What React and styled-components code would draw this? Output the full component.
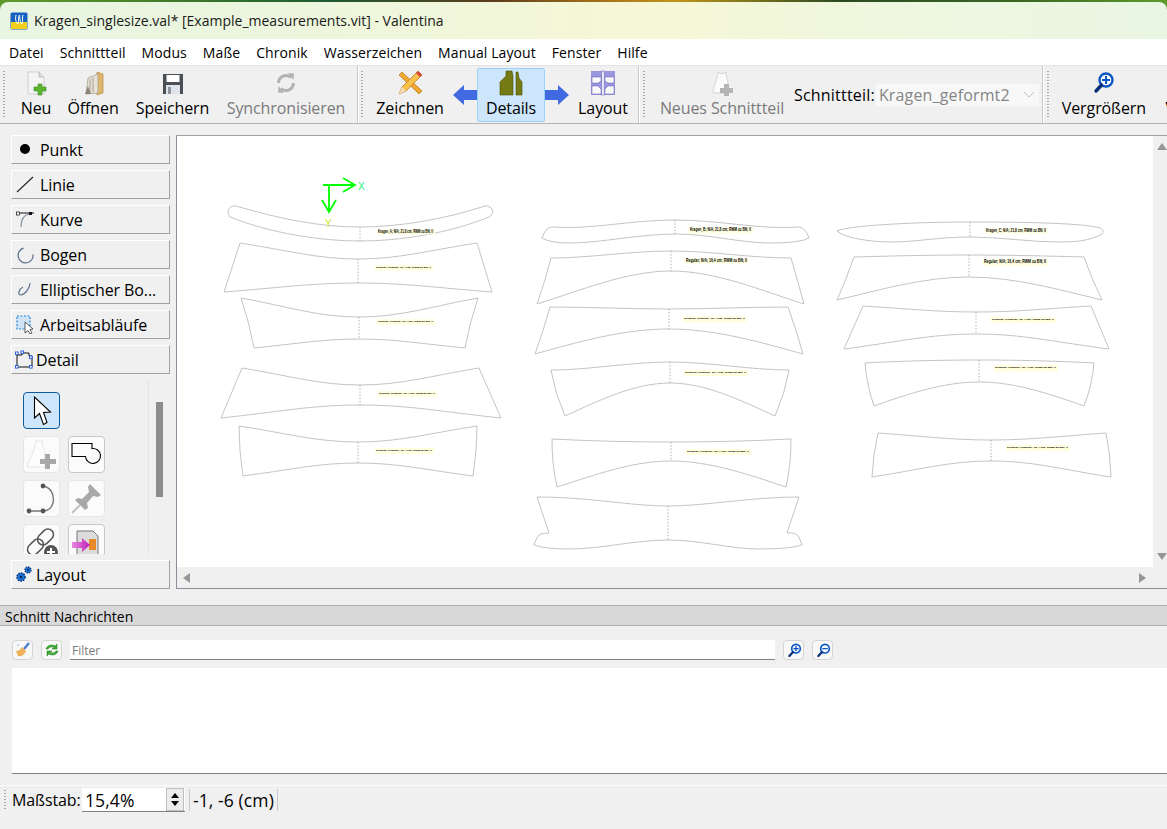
import React from 'react'
import styled, { createGlobalStyle } from 'styled-components'

const GlobalStyle = createGlobalStyle`
  html, body {
    margin: 0;
    height: 100%;
    overflow: hidden;
    background: #f0f0f0;
  }
  * { box-sizing: border-box; }
`

const Window = styled.div`
  width: 1167px;
  height: 829px;
  display: flex;
  flex-direction: column;
  overflow: hidden;
  background: #f0f0f0;
  color: #000;
  font-family: 'Open Sans', 'Noto Sans', sans-serif;
  font-size: 14px;
`

const Wallpaper = styled.div`
  padding-top: 2px;
  flex: none;
  background: linear-gradient(90deg, #5f9a2a 0%, #3f7a2a 15%, #1c5a30 28%, #5a3a1a 42%, #a8741a 52%, #c0941a 58%, #2a4a20 72%, #3a6a24 88%, #5f9a2a 100%);
`

const TitleBar = styled.div`
  height: 37px;
  padding-left: 10px;
  display: flex;
  align-items: center;
  gap: 6px;
  font-size: 14px;
  color: #1a1a1a;
  border-radius: 8px 8px 0 0;
  background: linear-gradient(90deg, #e7f5e2 0%, #eef6dc 30%, #f6f7d6 55%, #eef7e0 80%, #e9f6e4 100%);
`

const MenuBar = styled.div`
  height: 26px;
  flex: none;
  padding: 0 0 0 1px;
  display: flex;
  align-items: center;
  background: #fff;
  font-size: 14px;
  letter-spacing: 0.08px;
`

const MenuItem = styled.span`
  padding: 0 8px;
`

const ToolBar = styled.div`
  height: 59px;
  flex: none;
  display: flex;
  align-items: stretch;
  overflow: hidden;
  background: #f0f0f0;
  border-top: 1px solid #e4e4e4;
  border-bottom: 1px solid #b4b4b4;
`

const Handle = styled.div`
  flex: none;
  width: 2px;
  margin: 4px ${p => p.$after}px 4px ${p => p.$before}px;
  background-image: radial-gradient(circle, #a8a8a8 0.8px, transparent 1px);
  background-size: 2px 3px;
`

const Separator = styled.div`
  flex: none;
  width: 1px;
  margin-left: ${p => p.$left}px;
  background: #c8c8c8;
  box-shadow: 1px 0 0 #fff;
`

const ToolButton = styled.div`
  flex: none;
  width: ${p => p.$width}px;
  margin: 2px 0 1px;
  display: flex;
  flex-direction: column;
  align-items: center;
  justify-content: flex-end;
  padding-bottom: 2px;
  border: 1px solid ${p => (p.$active ? '#99d1ff' : 'transparent')};
  border-radius: 2px;
  background: ${p => (p.$active ? '#cde6fb' : 'transparent')};
  color: ${p => (p.$disabled ? '#7a7a7a' : '#000')};
  font-size: 16px;
  letter-spacing: -0.1px;
  line-height: 21px;
  white-space: nowrap;
`

const ToolIcon = styled.svg`
  width: 26px;
  height: 26px;
  margin-bottom: 2px;
`

const ModeArrow = styled.svg`
  flex: none;
  align-self: center;
  width: 24px;
  height: 20px;
  margin: 0 ${p => p.$right || 0}px 0 ${p => p.$left || 0}px;
`

const ComboLabel = styled.span`
  flex: none;
  align-self: center;
  margin-left: 5px;
  font-size: 16px;
  letter-spacing: 0.2px;
  white-space: nowrap;
`

const Combo = styled.div`
  flex: none;
  align-self: center;
  width: 165px;
  height: 24px;
  padding: 0 4px 0 3px;
  display: flex;
  align-items: center;
  justify-content: space-between;
  background: #f8f8f8;
  border: 1px solid #f2f2f2;
  color: #858585;
  font-size: 16px;
  letter-spacing: 0.15px;
`

const Body = styled.div`
  height: 465px;
  flex: none;
  display: flex;
`

const SidePanel = styled.div`
  width: 176px;
  flex: none;
  padding: 11px 6px 0 11px;
  display: flex;
  flex-direction: column;
  gap: 6px;
`

const GroupButton = styled.div`
  height: 29px;
  flex: none;
  display: flex;
  align-items: center;
  gap: ${p => p.$gap}px;
  padding-left: ${p => p.$pad}px;
  background: #f0f0f0;
  border: 1px solid;
  border-color: #fff #a0a0a0 #a0a0a0 #fff;
  font-size: 16px;
  letter-spacing: -0.1px;
  white-space: nowrap;
`

const GroupIcon = styled.svg`
  width: 19px;
  height: 19px;
  flex: none;
`

const ToolPanel = styled.div`
  height: 174px;
  flex: none;
  display: flex;
  overflow: hidden;
`

const ToolGrid = styled.div`
  width: 138px;
  flex: none;
  padding: 12px 0 0 12px;
  display: grid;
  grid-template-columns: 37px 37px;
  grid-auto-rows: 37px;
  gap: 7px 8px;
  border-right: 1px solid #e4e4e4;
`

const SquareTool = styled.div`
  width: 37px;
  height: 37px;
  display: flex;
  align-items: center;
  justify-content: center;
  border-radius: 4px;
  border: 1px solid ${p => (p.$active ? '#0f5a9a' : p.$dim ? '#e6e6e6' : '#c8c8c8')};
  background: ${p => (p.$active ? '#cde6fb' : '#fbfbfb')};
`

const ToolSvg = styled.svg`
  width: 35px;
  height: 35px;
`

const PanelThumb = styled.div`
  width: 7px;
  height: 95px;
  margin: 22px 0 0 7px;
  background: #8c8c8c;
`

const CanvasFrame = styled.div`
  flex: 1;
  margin-top: 11px;
  display: grid;
  grid-template-columns: 976px 1fr;
  grid-template-rows: 431px 1fr;
  border-left: 1px solid #8a8f99;
  border-top: 1px solid #a0a0a0;
  border-bottom: 1px solid #8a8f99;
`

const Sheet = styled.svg`
  width: 976px;
  height: 431px;
  display: block;
  background: #fff;
`

const VScroll = styled.div`
  display: flex;
  flex-direction: column;
  justify-content: space-between;
  align-items: center;
  padding: 7px 0 7px 4px;
`

const HScroll = styled.div`
  grid-column: 1 / span 2;
  display: flex;
  align-items: center;
  justify-content: space-between;
  padding: 0 21px 0 6px;
`

const Triangle = styled.span`
  width: 0;
  height: 0;
  border-style: solid;
  border-color: transparent;
  ${p => p.$dir === 'up' && 'border-width: 0 5px 7px; border-bottom-color: #969696;'}
  ${p => p.$dir === 'down' && 'border-width: 7px 5px 0; border-top-color: #969696;'}
  ${p => p.$dir === 'left' && 'border-width: 5px 7px 5px 0; border-right-color: #969696;'}
  ${p => p.$dir === 'right' && 'border-width: 5px 0 5px 7px; border-left-color: #969696;'}
`

const DockTitle = styled.div`
  height: 21px;
  flex: none;
  margin-top: 16px;
  padding: 1px 0 0 5px;
  display: flex;
  align-items: center;
  background: #d8d8d8;
  border-top: 1px solid #b0b0b0;
  border-bottom: 1px solid #b0b0b0;
  font-size: 14px;
`

const FilterRow = styled.div`
  height: 20px;
  flex: none;
  margin-top: 14px;
  padding-left: 12px;
  display: flex;
  align-items: center;
  gap: 8px;
`

const SmallButton = styled.div`
  width: 21px;
  height: 20px;
  flex: none;
  display: flex;
  align-items: center;
  justify-content: center;
  border: 1px solid #d4d4d4;
  border-radius: 4px;
  background: #f8f8f8;
`

const SmallIcon = styled.svg`
  width: 16px;
  height: 16px;
`

const FilterInput = styled.div`
  width: 705px;
  height: 20px;
  padding: 1px 0 0 2px;
  display: flex;
  align-items: center;
  background: #fff;
  border-bottom: 1px solid #808080;
  color: #7a7a7a;
  font-size: 12px;
`

const MessageList = styled.div`
  height: 106px;
  flex: none;
  margin: 8px 0 0 12px;
  background: #fff;
  border-bottom: 1px solid #808080;
`

const StatusBar = styled.div`
  flex: 1;
  margin-top: 11px;
  padding-top: 2px;
  display: flex;
  align-items: flex-start;
  border-top: 1px solid #fbfbfb;
`

const StatusHandle = styled.div`
  width: 2px;
  height: 22px;
  margin: 1px 6px 0 4px;
  background-image: radial-gradient(circle, #a8a8a8 0.8px, transparent 1px);
  background-size: 2px 3px;
`

const StatusLabel = styled.span`
  width: 70px;
  font-size: 16px;
  letter-spacing: -0.1px;
  line-height: 24px;
  white-space: nowrap;
`

const StatusValue = styled.span`
  font-size: 17.5px;
  letter-spacing: 0.1px;
  line-height: 24px;
  white-space: nowrap;
`

const SpinBox = styled.div`
  width: 103px;
  height: 24px;
  padding-left: 3px;
  display: flex;
  align-items: center;
  justify-content: space-between;
  background: #fff;
  border-bottom: 1px solid #808080;
`

const SpinButtons = styled.div`
  width: 18px;
  height: 23px;
  display: flex;
  flex-direction: column;
  align-items: center;
  justify-content: space-around;
  padding: 2px 0;
  margin-right: 1px;
  background: #ececec;
  border: 1px solid #c0c0c0;
`

const SpinUp = styled.span`
  width: 0;
  height: 0;
  border-style: solid;
  border-width: 0 4px 5px;
  border-color: transparent transparent #000;
`

const SpinDown = styled(SpinUp)`
  border-width: 5px 4px 0;
  border-color: #000 transparent transparent;
`

const StatusRule = styled.div`
  width: 1px;
  height: 22px;
  margin: 1px ${p => p.$right}px 0 ${p => p.$left}px;
  background: #c8c8c8;
`

const AppIcon = () => (
  <svg width="18" height="18" viewBox="0 0 18 18">
    <rect x="0.5" y="0.5" width="17" height="17" rx="1.5" fill="#1763c0" />
    <rect x="1" y="10" width="16" height="7" fill="#f2cf1b" />
    <path d="M6 3 C5 7 6 11 8 12 C9 9 8 5 9.5 3 C10 7 10 11 12 12 C13 9 12 5 13 3" fill="none" stroke="#fff" strokeWidth="1" />
  </svg>
)

const NewIcon = () => (
  <ToolIcon viewBox="0 0 26 26">
    <path d="M5 2 H16 L21 7 V24 H5 Z" fill="#f4f4f4" stroke="#cfcfcf" />
    <path d="M16 2 V7 H21" fill="#dcdcdc" stroke="#bdbdbd" />
    <path d="M15 14 H19 V17 H23 V21 H19 V25 H15 V21 H11 V17 H15 Z" fill="#5cb531" stroke="#3d8f1e" strokeWidth="0.6" />
  </ToolIcon>
)

const OpenIcon = () => (
  <ToolIcon viewBox="0 0 26 26">
    <path d="M17 2 L23 4 V23 L17 25 Z" fill="#e0b66a" stroke="#b48c48" strokeWidth="0.7" />
    <path d="M8 8 L18 4 V23 L6 24 Z" fill="#e6e1d6" stroke="#a09888" strokeWidth="0.7" />
    <path d="M10 9 V22 M13 7.5 V22" stroke="#a8a294" strokeWidth="1" />
    <path d="M5 24 L8 16 L11 24 Z" fill="#8c8577" />
  </ToolIcon>
)

const SaveIcon = () => (
  <ToolIcon viewBox="0 0 26 26">
    <path d="M3 4 H23 V24 H3 Z" fill="#4a4f55" />
    <rect x="6.5" y="5" width="13" height="7" fill="#fff" />
    <rect x="6" y="15" width="14" height="9" fill="#dfe3ea" />
    <rect x="8" y="17" width="3" height="7" fill="#8d949c" />
  </ToolIcon>
)

const SyncIcon = () => (
  <ToolIcon viewBox="0 0 26 26">
    <path d="M5.5 13 A7.5 7.5 0 0 1 18 7.5" fill="none" stroke="#b2b2b2" strokeWidth="3" />
    <path d="M20.5 13 A7.5 7.5 0 0 1 8 18.5" fill="none" stroke="#b2b2b2" strokeWidth="3" />
    <path d="M15 3 L21 3.5 L20.5 10 Z M11 23 L5 22.5 L5.5 16 Z" fill="#b2b2b2" />
  </ToolIcon>
)

const DrawIcon = () => (
  <ToolIcon viewBox="0 0 26 26">
    <path d="M2 5 L5 2 L25 21 L22 24 Z" fill="#f0a830" stroke="#b8741a" strokeWidth="0.7" />
    <path d="M21 1 L25 5 L9 21 L2 24 L5 17 Z" fill="#f6c04a" stroke="#b8741a" strokeWidth="0.7" />
    <path d="M21 1 L25 5 L23 7 L19 3 Z" fill="#d8443a" />
    <path d="M5 17 L9 21 L2 24 Z" fill="#f5dfb8" />
  </ToolIcon>
)

const DetailsIcon = () => (
  <ToolIcon viewBox="0 0 26 26">
    <path d="M2 25 V12 L8 6 V1 H14 L15 6 V25 Z" fill="#767a12" stroke="#4f520a" strokeWidth="0.6" />
    <path d="M18 25 V2 H20 L21 8 L24 12 V25 Z" fill="#767a12" stroke="#4f520a" strokeWidth="0.6" />
  </ToolIcon>
)

const LayoutIcon = () => (
  <ToolIcon viewBox="0 0 26 26">
    <rect x="1" y="1" width="24" height="24" fill="#9a96e2" />
    <path d="M2 7 H11 V11 L8 13 H2 Z M2 16 H8 L11 19 V24 H2 Z M15 7 H24 V13 H18 L15 11 Z M15 19 L18 16 H24 V24 H15 Z" fill="#fafafa" stroke="#5d59ae" strokeWidth="0.5" />
    <rect x="11.5" y="1" width="3" height="24" fill="#e6e6f6" stroke="#5d59ae" strokeWidth="0.5" />
  </ToolIcon>
)

const PieceIcon = () => (
  <ToolIcon viewBox="0 0 26 26">
    <path d="M9 2 L13 4 L17 2 C17 8 19 10 19 14 V23 H4 C4 16 8 12 9 2 Z" fill="#fbfbfb" stroke="#d4d4d4" />
    <path d="M15 14 H20 V18 H24 V23 H20 V26 H15 V23 H11 V18 H15 Z" fill="#b4b4b4" />
  </ToolIcon>
)

const ZoomGlyph = ({ minus }) => (
  <>
    <circle cx="15" cy="10" r="6.5" fill="#fff" stroke="#0b55c4" strokeWidth="2.4" />
    <path d="M11 10 H19" stroke="#0b55c4" strokeWidth="2" />
    {!minus && <path d="M15 6 V14" stroke="#0b55c4" strokeWidth="2" />}
    <path d="M10.5 15 L5 21" stroke="#0c2f7a" strokeWidth="3.4" strokeLinecap="round" />
  </>
)

const LeftArrow = () => (
  <ModeArrow $left={7} viewBox="0 0 24 20">
    <path d="M0 10 L11 0 V5 H24 V15 H11 V20 Z" fill="#4169e1" />
  </ModeArrow>
)

const RightArrow = () => (
  <ModeArrow $right={8} viewBox="0 0 24 20">
    <path d="M24 10 L13 0 V5 H0 V15 H13 V20 Z" fill="#4169e1" />
  </ModeArrow>
)

const groupIcons = {
  punkt: <circle cx="9" cy="9" r="5" fill="#000" />,
  linie: <path d="M1 17 L17 2" stroke="#222" strokeWidth="1.1" />,
  kurve: (
    <>
      <path d="M5 17 C5 10 8 5 13 4" fill="none" stroke="#7a8aa0" strokeWidth="1.1" />
      <path d="M1 3 H18" stroke="#111" strokeWidth="1" />
      <rect x="0.5" y="2" width="3" height="3" fill="#fff" stroke="#111" strokeWidth="0.7" />
      <rect x="13" y="2" width="3" height="3" fill="#111" />
    </>
  ),
  bogen: <path d="M9 3 A7.5 7.5 0 1 0 17 11" fill="none" stroke="#5a6f8c" strokeWidth="1.2" transform="rotate(-12 9 10)" />,
  ellipse: <path d="M14 3 C14 7 10 14 5 15 C1 15 3 9 7 7" fill="none" stroke="#5a6f8c" strokeWidth="1.1" />,
  flow: (
    <>
      <rect x="1" y="1" width="13" height="13" fill="#cfe4f7" stroke="#2a86d8" strokeWidth="1.2" strokeDasharray="2 1.5" />
      <path d="M9 7 L9 18 L12 15.5 L14 19 L16 18 L14 14.5 L17 14 Z" fill="#fff" stroke="#333" strokeWidth="0.8" />
    </>
  ),
  detail: (
    <>
      <path d="M2 5 H7 V3 H14 V6 H17 V17 H2 Z" fill="none" stroke="#111" strokeWidth="1" />
      <g fill="#fff" stroke="#2356e0" strokeWidth="0.9">
        <rect x="0.5" y="2" width="2.6" height="2.6" />
        <rect x="6" y="1" width="2.6" height="2.6" />
        <rect x="14.5" y="6" width="2.6" height="2.6" />
        <rect x="0.5" y="15.5" width="2.6" height="2.6" />
        <rect x="14.5" y="15.5" width="2.6" height="2.6" />
      </g>
    </>
  ),
  layout: (
    <>
      <circle cx="6" cy="12" r="4" fill="#1e73d8" stroke="#0a3a80" strokeWidth="1.6" strokeDasharray="1.6 1" />
      <circle cx="6" cy="12" r="1.2" fill="#0b2340" />
      <circle cx="13" cy="5" r="3" fill="#1e73d8" stroke="#0a3a80" strokeWidth="1.4" strokeDasharray="1.4 0.9" />
      <circle cx="13" cy="5" r="1" fill="#0b2340" />
    </>
  ),
}

const groups = [
  { id: 'punkt', label: 'Punkt', pad: 4, gap: 5 },
  { id: 'linie', label: 'Linie', pad: 4, gap: 5 },
  { id: 'kurve', label: 'Kurve', pad: 4, gap: 5 },
  { id: 'bogen', label: 'Bogen', pad: 4, gap: 5 },
  { id: 'ellipse', label: 'Elliptischer Bo...', pad: 4, gap: 5 },
  { id: 'flow', label: 'Arbeitsabläufe', pad: 4, gap: 5 },
  { id: 'detail', label: 'Detail', pad: 3, gap: 2 },
]

const tools = [
  {
    key: 'pointer',
    active: true,
    art: <path d="M10.5 4 L10.5 25 L15.5 20.5 L19.5 31.5 L23 29.5 L19.5 19.5 L26.5 19 Z" fill="#fff" stroke="#000" strokeWidth="1.1" />,
  },
  { key: 'empty' },
  {
    key: 'piece',
    dim: true,
    art: (
      <>
        <path d="M12 3 L15 5 L18 3 C18 10 21 12 21 18 V30 H3 C5 22 11 15 12 3 Z" fill="#fdfdfd" stroke="#e6e6e6" />
        <path d="M21 17 H26 V22 H32 V27 H26 V32 H21 V27 H16 V22 H21 Z" fill="#a8a8a8" />
      </>
    ),
  },
  {
    key: 'shape',
    art: <path d="M3 6.5 H23 V11.5 A7.5 7.5 0 1 1 16.5 19.5 H3 Z" fill="none" stroke="#000" strokeWidth="1.1" />,
  },
  {
    key: 'path',
    dim: true,
    art: (
      <>
        <path d="M19 5 C33 7 33 30 19 30 H5" fill="none" stroke="#777" strokeWidth="1.4" />
        <circle cx="19" cy="5" r="2.4" fill="#555" />
        <circle cx="19" cy="30" r="2.4" fill="#555" />
        <circle cx="5" cy="30" r="2.4" fill="#555" />
      </>
    ),
  },
  {
    key: 'pin',
    dim: true,
    art: (
      <>
        <path d="M21 3 L32 14 L29 16 L24 15 L18 22 L19 27 L16 29 L6 19 L9 17 L13 18 L20 11 L19 6 Z" fill="#a8a8a8" />
        <path d="M11 24 L3 32" stroke="#c0c0c0" strokeWidth="2" />
      </>
    ),
  },
  {
    key: 'link',
    dim: true,
    art: (
      <>
        <g fill="none" stroke="#555" strokeWidth="1.5">
          <rect x="16" y="3" width="11" height="18" rx="5.5" transform="rotate(45 21.5 12)" />
          <rect x="6" y="13" width="11" height="18" rx="5.5" transform="rotate(45 11.5 22)" />
        </g>
        <circle cx="27" cy="27" r="7" fill="#555" />
        <path d="M23 27 H31 M27 23 V31" stroke="#fff" strokeWidth="2" />
      </>
    ),
  },
  {
    key: 'export',
    art: (
      <>
        <defs>
          <linearGradient id="exportArrow" x1="0" x2="1" y1="0" y2="0">
            <stop offset="0" stopColor="#e88ae0" />
            <stop offset="1" stopColor="#c020b8" />
          </linearGradient>
        </defs>
        <path d="M8 6 H24 L29 11 V34 H8 Z" fill="#dcdcdc" stroke="#777" />
        <rect x="20" y="14" width="7" height="11" fill="#e88a2a" />
        <path d="M3 17 H13 V13 L21 20 L13 27 V23 H3 Z" fill="url(#exportArrow)" />
      </>
    ),
  },
]

const curve = (a, mid, b) => {
  const dx = mid[0] - a[0]
  const dy = mid[1] - a[1]
  const ex = b[0] - mid[0]
  const ey = b[1] - mid[1]
  return `C${a[0] + dx * 0.4} ${a[1] + dy * 0.45} ${mid[0] - dx * 0.35} ${mid[1]} ${mid[0]} ${mid[1]} C${mid[0] + ex * 0.35} ${mid[1]} ${b[0] - ex * 0.4} ${b[1] - ey * 0.45} ${b[0]} ${b[1]}`
}

// outline of a collar band out of its four corners and the two centre points
const band = ({ tl, tr, br, bl, top, bot, bulge = 0 }) => {
  const rc = [(tr[0] + br[0]) / 2 + bulge, (tr[1] + br[1]) / 2]
  const lc = [(tl[0] + bl[0]) / 2 - bulge, (tl[1] + bl[1]) / 2]
  return `M${tl[0]} ${tl[1]} ${curve(tl, top, tr)} Q${rc[0]} ${rc[1]} ${br[0]} ${br[1]} ${curve(br, bot, bl)} Q${lc[0]} ${lc[1]} ${tl[0]} ${tl[1]}Z`
}

const FINE = 'Regular; N/A; 16,4 cm; RWM zu BN; II'

const pieces = [
  {
    d: 'M230 217 Q227 213 228 211 Q230 205 236 206 C280 219 320 227 360 227 C400 227 445 219 485 206 Q491 205 493 212 Q492 215 489 217 C450 233 400 241 360 241 C320 241 270 233 230 217Z',
    fold: [360, 227, 241], label: [377, 229, 58, 5.5], text: 'Kragen_A; N/A; 21,8 cm; RWM zu BN; II', bold: true,
  },
  {
    d: band({ tl: [240, 243], tr: [477, 243], br: [492, 292], bl: [224, 292], top: [358, 259], bot: [358, 283] }),
    fold: [358, 259, 283], label: [375, 265, 58, 5.5],
  },
  {
    d: band({ tl: [241, 298], tr: [478, 298], br: [465, 348], bl: [254, 348], top: [359, 317], bot: [359, 339], bulge: -2 }),
    fold: [359, 317, 339], label: [377, 319, 58, 6],
  },
  {
    d: band({ tl: [242, 368], tr: [479, 368], br: [501, 418], bl: [221, 418], top: [360, 385], bot: [360, 405] }),
    fold: [360, 385, 405], label: [378, 391, 59, 6],
  },
  {
    d: band({ tl: [239, 426], tr: [477, 426], br: [473, 476], bl: [243, 476], top: [358, 442], bot: [358, 463], bulge: 2 }),
    fold: [358, 442, 463], label: [375, 448, 59, 6],
  },
  {
    d: 'M542 238 Q545 228 552 227 C590 230 630 220 675 220 C720 220 760 230 800 227 Q806 229 809 238 Q800 243 770 243 C740 243 710 234 675 234 C640 234 600 243 570 243 Q550 243 542 238Z',
    fold: [675, 220, 234], label: [689, 227, 64, 6.5], text: 'Kragen_B; N/A; 21,8 cm; RWM zu BN; II', bold: true,
  },
  {
    d: 'M551 258 C590 258 630 251 671 251 C712 251 750 258 791 258 Q798 282 804 304 C760 290 715 271 671 271 C627 271 582 290 537 304 Q545 282 551 258Z',
    fold: [671, 251, 271], label: [685, 258, 64, 5.5], text: FINE, bold: true,
  },
  {
    d: 'M550 307 C590 307 630 309 669 309 C708 309 748 307 788 307 Q797 332 803 354 C760 342 715 329 669 329 C623 329 578 342 535 354 Q543 332 550 307Z',
    fold: [669, 309, 329], label: [683, 316, 64, 6.5],
  },
  {
    d: 'M551 370 C590 370 630 362 670 362 C710 362 750 370 789 370 Q785 394 775 416 C740 400 705 383 670 383 C635 383 600 400 565 416 Q555 394 551 370Z',
    fold: [670, 362, 383], label: [684, 370, 64, 6],
  },
  {
    d: 'M552 439 C590 441 630 442 671 442 C712 442 752 441 791 439 Q791 466 786 487 C750 475 710 461 671 461 C632 461 595 475 557 487 Q552 466 552 439Z',
    fold: [671, 442, 461], label: [686, 449, 65, 6],
  },
  {
    d: 'M537 497 C590 497 630 506 668 506 C706 506 750 497 799 497 L787 533 Q796 532 799 537 L802 545 Q790 549 760 549 C730 549 700 540 668 540 C636 540 600 549 570 549 Q545 549 534 545 Q537 535 541 534 Q545 533 549 533 Z',
    fold: [668, 506, 540],
  },
  {
    d: 'M837 231 C850 225 920 222 970 222 C1020 222 1085 223 1100 228 Q1105 231 1102 234 C1090 241 1075 242 1058 242 C1030 242 1000 237 970 237 C940 237 915 242 892 242 C870 242 845 238 837 231Z',
    fold: [970, 222, 237], label: [985, 228, 63, 5.5], text: 'Kragen_C; N/A; 21,8 cm; RWM zu BN; II', bold: true,
  },
  {
    d: 'M854 257 C890 256 930 255 969 255 C1008 255 1048 256 1084 257 Q1092 280 1102 300 C1060 290 1015 277 969 277 C923 277 880 290 837 300 Q846 280 854 257Z',
    fold: [969, 255, 277], label: [983, 259, 65, 7], text: FINE, bold: true,
  },
  {
    d: band({ tl: [863, 306], tr: [1091, 306], br: [1109, 349], bl: [844, 349], top: [976, 312], bot: [976, 334] }),
    fold: [976, 312, 334], label: [991, 317, 65, 6],
  },
  {
    d: 'M865 363 C900 361 940 360 979 360 C1018 360 1058 361 1094 363 Q1092 386 1084 406 C1050 394 1015 382 979 382 C943 382 908 394 874 406 Q867 386 865 363Z',
    fold: [979, 360, 382], label: [994, 365, 64, 6.5],
  },
  {
    d: band({ tl: [878, 433], tr: [1106, 433], br: [1111, 477], bl: [872, 477], top: [991, 440], bot: [991, 461], bulge: 2 }),
    fold: [991, 440, 461], label: [1006, 445, 64, 6],
  },
]

const Piece = ({ d, fold, label, text, bold }) => (
  <g>
    <path d={d} fill="none" stroke="#c4c4c4" strokeWidth="1" />
    <path d={`M${fold[0]} ${fold[1]} V${fold[2]}`} stroke="#9a9a9a" strokeWidth="0.8" strokeDasharray="1.4 1.8" />
    {label && (
      <>
        <rect x={label[0]} y={label[1]} width={label[2]} height={label[3]} fill="#ffffe0" />
        <text
          x={label[0] + 1}
          y={label[1] + (bold ? 4 : 3)}
          textLength={label[2] - 3}
          lengthAdjust="spacingAndGlyphs"
          fontFamily="'Liberation Sans', sans-serif"
          fontSize={bold ? 5 : 2.4}
          fontWeight="700"
          fill="#000"
        >
          {text || 'Regular, Regular; 16,4 cm; RWM zu BN; II'}
        </text>
      </>
    )}
  </g>
)

const App = () => (
  <>
    <GlobalStyle />
    <Window>
      <Wallpaper>
        <TitleBar>
          <AppIcon />
          <span>Kragen_singlesize.val* [Example_measurements.vit] - Valentina</span>
        </TitleBar>
      </Wallpaper>
      <MenuBar>
        {['Datei', 'Schnittteil', 'Modus', 'Maße', 'Chronik', 'Wasserzeichen', 'Manual Layout', 'Fenster', 'Hilfe'].map(m => (
          <MenuItem key={m}>{m}</MenuItem>
        ))}
      </MenuBar>
      <ToolBar>
        <Handle $before={3} $after={8} />
        <ToolButton $width={46}><NewIcon />Neu</ToolButton>
        <ToolButton $width={68}><OpenIcon />Öffnen</ToolButton>
        <ToolButton $width={91}><SaveIcon />Speichern</ToolButton>
        <ToolButton $width={136} $disabled><SyncIcon />Synchronisieren</ToolButton>
        <Separator $left={3} />
        <Handle $before={3} $after={11} />
        <ToolButton $width={72}><DrawIcon />Zeichnen</ToolButton>
        <LeftArrow />
        <ToolButton $width={68} $active><DetailsIcon />Details</ToolButton>
        <RightArrow />
        <ToolButton $width={52}><LayoutIcon />Layout</ToolButton>
        <Separator $left={9} />
        <Handle $before={4} $after={10} />
        <ToolButton $width={134} $disabled><PieceIcon />Neues Schnittteil</ToolButton>
        <ComboLabel>Schnittteil:</ComboLabel>
        <Combo>
          <span>Kragen_geformt2</span>
          <svg width="12" height="8" viewBox="0 0 12 8"><path d="M1 1 L6 6 L11 1" fill="none" stroke="#c0c0c0" /></svg>
        </Combo>
        <Separator $left={2} />
        <Handle $before={4} $after={5} />
        <ToolButton $width={100}>
          <ToolIcon viewBox="0 0 26 26"><ZoomGlyph /></ToolIcon>
          Vergrößern
        </ToolButton>
        <ToolButton $width={108}>
          <ToolIcon viewBox="0 0 26 26"><ZoomGlyph minus /></ToolIcon>
          Verkleinern
        </ToolButton>
      </ToolBar>
      <Body>
        <SidePanel>
          {groups.map(g => (
            <GroupButton key={g.id} $pad={g.pad} $gap={g.gap}>
              <GroupIcon viewBox="0 0 19 19">{groupIcons[g.id]}</GroupIcon>
              {g.label}
            </GroupButton>
          ))}
          <ToolPanel>
            <ToolGrid>
              {tools.map(t =>
                t.art ? (
                  <SquareTool key={t.key} $active={t.active} $dim={t.dim}>
                    <ToolSvg viewBox="0 0 35 35">{t.art}</ToolSvg>
                  </SquareTool>
                ) : (
                  <span key={t.key} />
                ),
              )}
            </ToolGrid>
            <PanelThumb />
          </ToolPanel>
          <GroupButton $pad={3} $gap={2}>
            <GroupIcon viewBox="0 0 19 19">{groupIcons.layout}</GroupIcon>
            Layout
          </GroupButton>
        </SidePanel>
        <CanvasFrame>
          <Sheet viewBox="177 136 976 431">
            {pieces.map((p, i) => (
              <Piece key={i} {...p} />
            ))}
            <g fill="none" stroke="#00ff00" strokeWidth="1.8">
              <path d="M323 185 H355 M343 178 L355 185 L343 192" />
              <path d="M329 185 V212 M322 200 L329 212 L336 200" />
            </g>
            <text x="358" y="190" fontFamily="'Liberation Sans', sans-serif" fontSize="10" fill="#2cf07a">X</text>
            <text x="325" y="227" fontFamily="'Liberation Sans', sans-serif" fontSize="10" fill="#c8e820">Y</text>
          </Sheet>
          <VScroll>
            <Triangle $dir="up" />
            <Triangle $dir="down" />
          </VScroll>
          <HScroll>
            <Triangle $dir="left" />
            <Triangle $dir="right" />
          </HScroll>
        </CanvasFrame>
      </Body>
      <DockTitle>Schnitt Nachrichten</DockTitle>
      <FilterRow>
        <SmallButton>
          <SmallIcon viewBox="0 0 16 16">
            <path d="M14 1 L9 7" stroke="#4a7fd0" strokeWidth="2.4" />
            <path d="M7 5 L11 9 C10 12 7 15 3 14 L1 9 C3 9 5 8 7 5 Z" fill="#eeb25a" />
            <circle cx="3" cy="3" r="0.8" fill="#7fb0e0" />
          </SmallIcon>
        </SmallButton>
        <SmallButton>
          <SmallIcon viewBox="0 0 16 16">
            <path d="M2 7 C3 3 8 2 11 4 L13 2 V7 H8 L10 5.5 C8 4.5 5 5 4 7 Z" fill="#3fae36" stroke="#1f7a1e" strokeWidth="0.5" />
            <path d="M14 9 C13 13 8 14 5 12 L3 14 V9 H8 L6 10.5 C8 11.5 11 11 12 9 Z" fill="#3fae36" stroke="#1f7a1e" strokeWidth="0.5" />
          </SmallIcon>
        </SmallButton>
        <FilterInput>Filter</FilterInput>
        <SmallButton>
          <SmallIcon viewBox="0 0 24 24"><ZoomGlyph /></SmallIcon>
        </SmallButton>
        <SmallButton>
          <SmallIcon viewBox="0 0 24 24"><ZoomGlyph minus /></SmallIcon>
        </SmallButton>
      </FilterRow>
      <MessageList />
      <StatusBar>
        <StatusHandle />
        <StatusLabel>Maßstab:</StatusLabel>
        <SpinBox>
          <StatusValue>15,4%</StatusValue>
          <SpinButtons>
            <SpinUp />
            <SpinDown />
          </SpinButtons>
        </SpinBox>
        <StatusRule $left={4} $right={3} />
        <StatusValue>-1, -6 (cm)</StatusValue>
        <StatusRule $left={3} $right={0} />
      </StatusBar>
    </Window>
  </>
)

export default App
